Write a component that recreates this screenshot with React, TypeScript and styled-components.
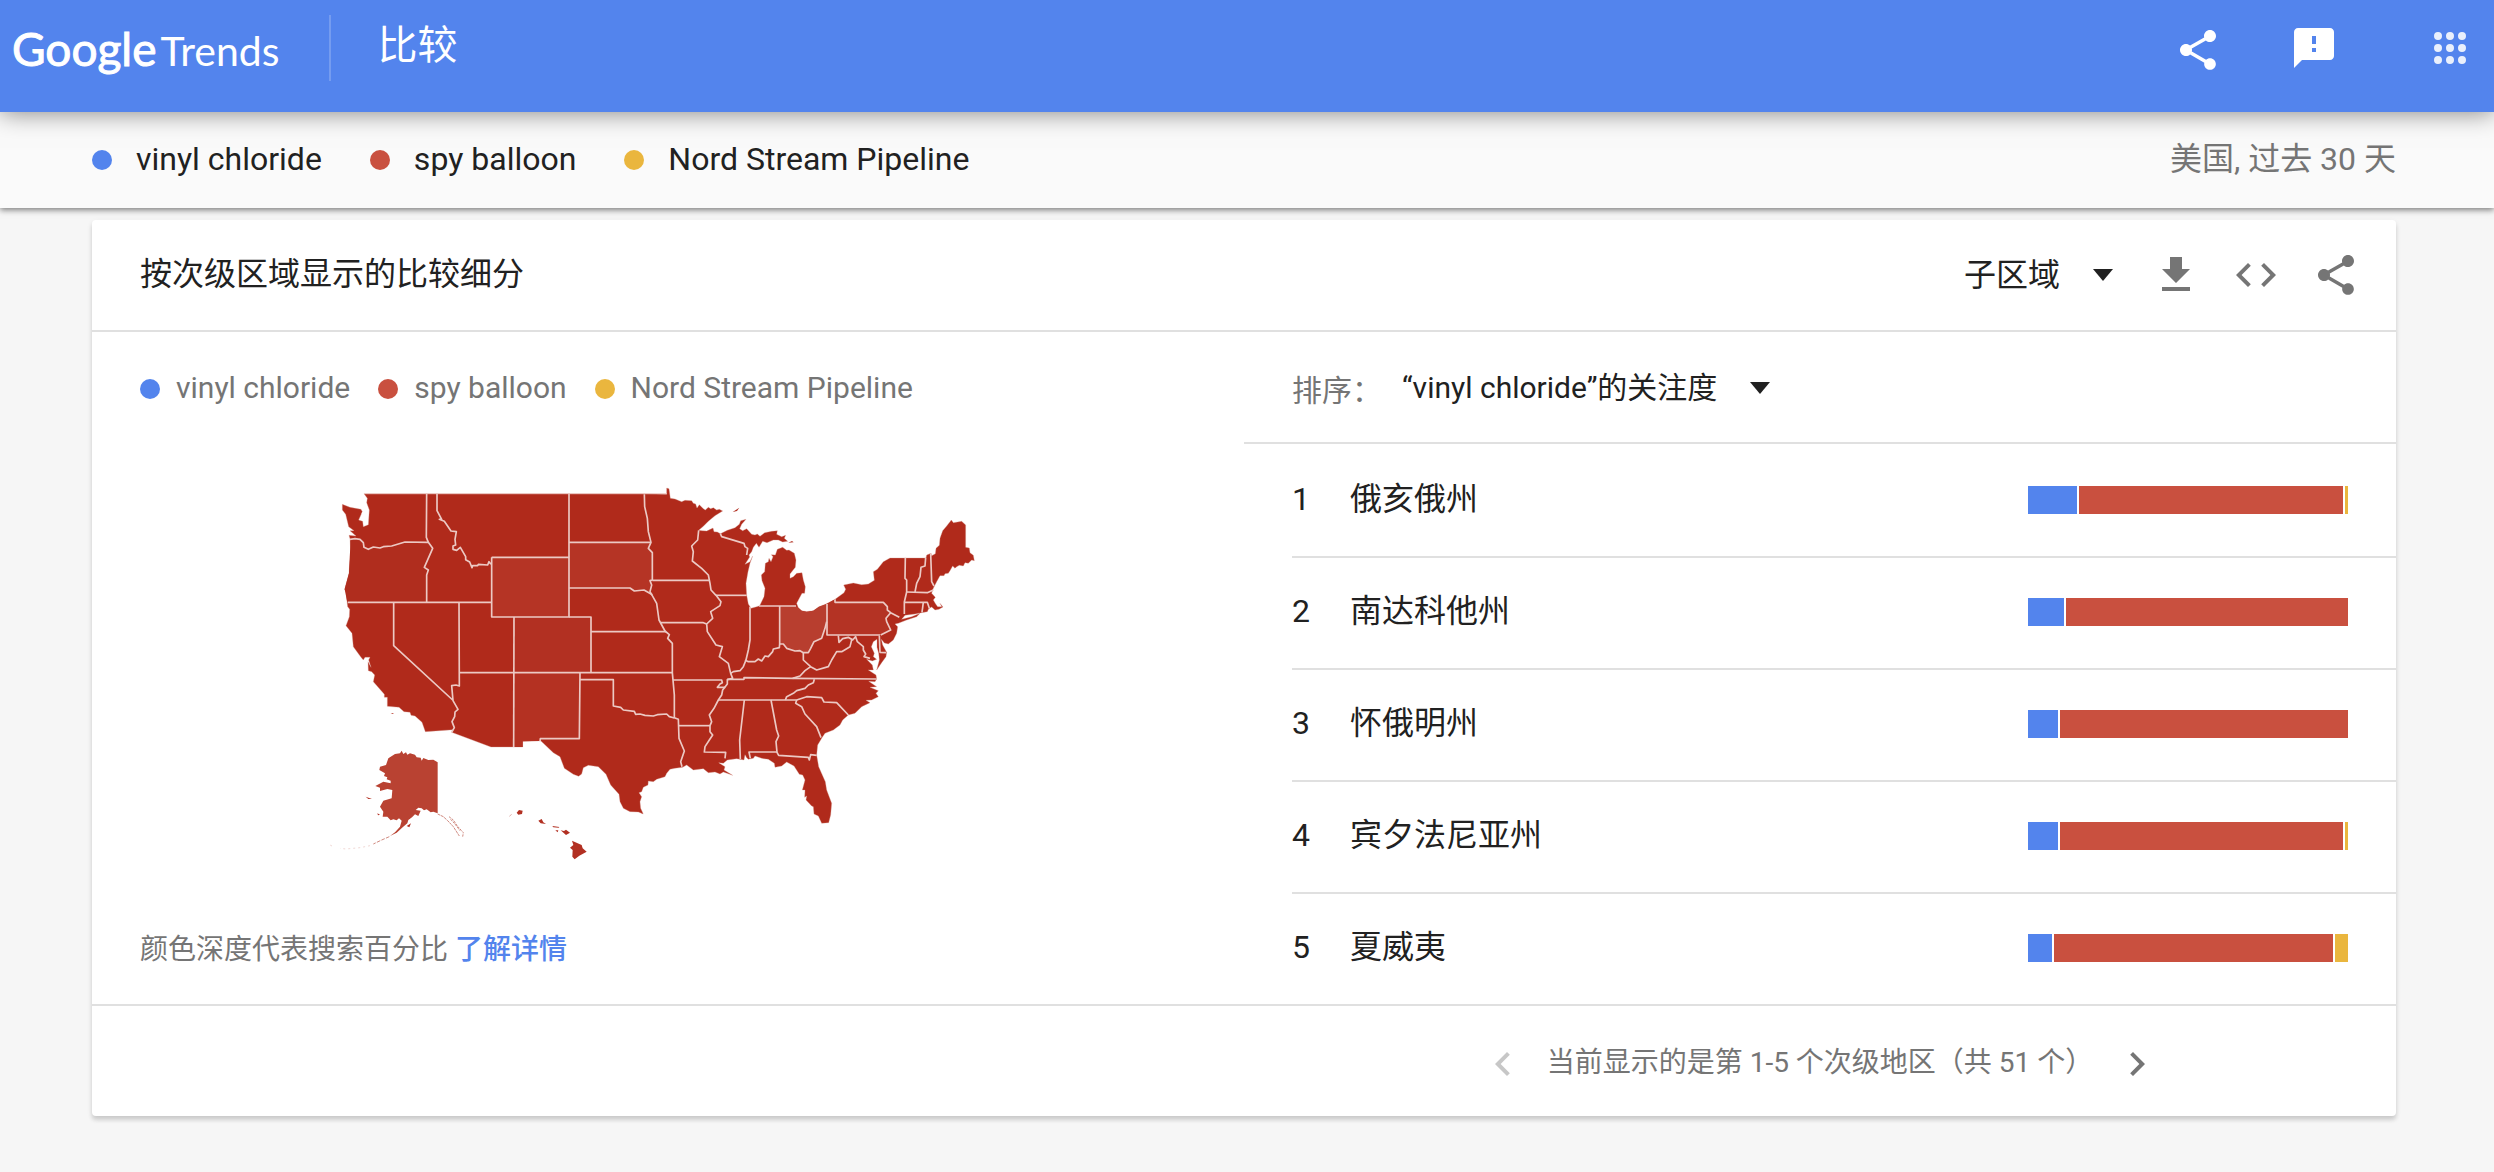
import React from 'react';
import styled, { createGlobalStyle, css } from 'styled-components';

const color = {
  blue: '#5384ed',
  red: '#c9503f',
  yellow: '#eab63e',
  text: '#212121',
  muted: '#757575',
  line: '#e0e0e0',
};

const GlobalStyle = createGlobalStyle`
  *, *::before, *::after { box-sizing: border-box; }
  body {
    margin: 0;
    background: #f6f6f6;
    color: ${color.text};
    font-family: Roboto, "Noto Sans CJK SC", sans-serif;
    font-size: 32px;
    line-height: 40px;
  }
  h1, h2, p, ul, ol { margin: 0; padding: 0; font-weight: 400; }
  ul, ol { list-style: none; }
`;

const Header = styled.header`
  position: relative;
  z-index: 2;
  display: flex;
  align-items: center;
  height: 112px;
  padding: 0 20px 16px 12px;
  background: ${color.blue};
  color: #fff;
  box-shadow: 0 0 24px rgba(0, 0, 0, 0.5);
`;

const Logo = styled.a`
  display: flex;
  align-items: baseline;
  gap: 4px;
  padding-top: 4px;
  color: inherit;
  font-family: Lato, sans-serif;
  font-size: 41px;
  line-height: 48px;
  text-decoration: none;
`;

const LogoBrand = styled.span`
  font-size: 46px;
  -webkit-text-stroke: 1px currentColor;
`;

const PageTitle = styled.h1`
  margin-left: 50px;
  padding: 11px 0 15px 46px;
  border-left: 2px solid rgba(255, 255, 255, 0.2);
  font-size: 40px;
`;

const HeaderActions = styled.div`
  display: flex;
  gap: 68px;
  margin-left: auto;
`;

const AppsSlot = styled.div`
  display: flex;
  margin-left: 20px;
  opacity: 0.88;
`;

const IconButton = styled.button`
  display: flex;
  flex: none;
  width: 48px;
  height: 48px;
  padding: 0;
  border: 0;
  background: none;
  color: inherit;
  cursor: pointer;

  &:disabled {
    opacity: 0.4;
    cursor: default;
  }
`;

const Glyph = styled.svg`
  display: block;
  width: 100%;
  height: 100%;
  fill: currentColor;
`;

const SubBar = styled.div`
  position: relative;
  z-index: 1;
  display: flex;
  align-items: center;
  justify-content: space-between;
  height: 96px;
  padding: 0 98px 0 92px;
  background: #fafafa;
  box-shadow: 0 2px 6px rgba(0, 0, 0, 0.5);
`;

const Terms = styled.ul<{ $compact?: boolean }>`
  display: flex;
  flex-wrap: wrap;
  gap: 48px;
  ${({ $compact }) =>
    $compact &&
    css`
      gap: 28px;
      color: ${color.muted};
      font-size: 30px;
      line-height: 36px;
    `}
`;

const Term = styled.li<{ $color: string; $gap: number }>`
  display: flex;
  align-items: center;
  gap: ${({ $gap }) => $gap}px;

  &::before {
    content: '';
    width: 20px;
    height: 20px;
    border-radius: 50%;
    background: ${({ $color }) => $color};
  }
`;

const TermName = styled.span`
  padding-bottom: 2px;
`;

const Scope = styled.p`
  padding-bottom: 2px;
  color: ${color.muted};
`;

const Card = styled.section`
  margin: 12px 98px 56px 92px;
  border-radius: 4px;
  background: #fff;
  box-shadow: 0 4px 4px rgba(0, 0, 0, 0.14), 0 2px 6px rgba(0, 0, 0, 0.06);
`;

const CardHeader = styled.div`
  display: flex;
  align-items: center;
  height: 112px;
  padding: 0 36px 0 48px;
  border-bottom: 2px solid ${color.line};
`;

const CardTitle = styled.h2`
  padding-bottom: 2px;
  font-size: 32px;
`;

const CardTools = styled.div`
  display: flex;
  gap: 32px;
  margin-left: 39px;
  color: ${color.muted};
`;

const Picker = styled.div<{ $end?: boolean }>`
  display: grid;
  align-items: center;
  margin-left: ${({ $end }) => ($end ? 'auto' : '0')};
`;

const PickerSelect = styled.select<{ $size: number }>`
  grid-area: 1 / 1;
  appearance: none;
  margin: 0;
  padding: 0 52px 0 0;
  border: 0;
  background: none;
  color: ${color.text};
  font: inherit;
  font-size: ${({ $size }) => $size}px;
  line-height: 40px;
  cursor: pointer;
`;

const PickerArrow = styled.span`
  grid-area: 1 / 1;
  justify-self: end;
  border-top: 12px solid ${color.text};
  border-right: 10px solid transparent;
  border-left: 10px solid transparent;
  pointer-events: none;
`;

const Columns = styled.div`
  display: grid;
  grid-template-columns: 1fr 1fr;
`;

const MapPanel = styled.div`
  padding: 38px 48px 34px;
`;

const MapDrawing = styled.svg`
  display: block;
  width: 736px;
  max-width: 100%;
  margin: 52px auto 50px;
`;

const Footnote = styled.p`
  color: ${color.muted};
  font-size: 28px;
`;

const TextLink = styled.a`
  color: ${color.blue};
  font-weight: 500;
  text-decoration: none;
`;

const SortBar = styled.div`
  display: flex;
  align-items: center;
  height: 112px;
  padding: 2px 0 0 48px;
  border-bottom: 2px solid ${color.line};
`;

const SortLabel = styled.label`
  padding-top: 6px;
  width: 110px;
  color: ${color.muted};
  font-size: 30px;
`;

const RegionList = styled.ol`
  padding-left: 48px;
`;

const Region = styled.li`
  display: flex;
  align-items: center;
  height: 112px;
  padding-right: 48px;

  & + & {
    padding-bottom: 2px;
    border-top: 2px solid ${color.line};
  }
`;

const Rank = styled.span`
  width: 58px;
  padding-bottom: 2px;
`;

const RegionName = styled.span`
  padding-bottom: 2px;
`;

const Bar = styled.div`
  display: flex;
  gap: 2px;
  width: 320px;
  height: 28px;
  margin-left: auto;
`;

const Segment = styled.span<{ $color: string }>`
  background: ${({ $color }) => $color};
`;

const CardFooter = styled.div`
  display: grid;
  grid-template-columns: 1fr 1fr;
  align-items: center;
  height: 112px;
  padding-top: 6px;
  border-top: 2px solid ${color.line};
`;

const Pager = styled.nav`
  display: flex;
  grid-column: 2;
  align-items: center;
  justify-content: center;
  gap: 20px;
  color: ${color.muted};
  font-size: 28px;
`;

const PagerText = styled.span`
  padding-bottom: 2px;
`;

const iconPaths = {
  share:
    'M18 16.08c-.76 0-1.44.3-1.96.77L8.91 12.7c.05-.23.09-.46.09-.7s-.04-.47-.09-.7l7.05-4.11c.54.5 1.25.81 2.04.81 1.66 0 3-1.34 3-3s-1.34-3-3-3-3 1.34-3 3c0 .24.04.47.09.7L8.04 9.81C7.5 9.31 6.79 9 6 9c-1.66 0-3 1.34-3 3s1.34 3 3 3c.79 0 1.5-.31 2.04-.81l7.12 4.16c-.05.21-.08.43-.08.65 0 1.61 1.31 2.92 2.92 2.92s2.92-1.31 2.92-2.92-1.31-2.92-2.92-2.92z',
  feedback:
    'M20 2H4c-1.1 0-1.99.9-1.99 2L2 22l4-4h14c1.1 0 2-.9 2-2V4c0-1.1-.9-2-2-2zm-7 12h-2v-2h2v2zm0-4h-2V6h2v4z',
  apps:
    'M6 8a2 2 0 1 0 0-4 2 2 0 0 0 0 4zm6 0a2 2 0 1 0 0-4 2 2 0 0 0 0 4zm6 0a2 2 0 1 0 0-4 2 2 0 0 0 0 4zM6 14a2 2 0 1 0 0-4 2 2 0 0 0 0 4zm6 0a2 2 0 1 0 0-4 2 2 0 0 0 0 4zm6 0a2 2 0 1 0 0-4 2 2 0 0 0 0 4zM6 20a2 2 0 1 0 0-4 2 2 0 0 0 0 4zm6 0a2 2 0 1 0 0-4 2 2 0 0 0 0 4zm6 0a2 2 0 1 0 0-4 2 2 0 0 0 0 4z',
  download: 'M19 9h-4V3H9v6H5l7 7 7-7zM5 18v2h14v-2H5z',
  code:
    'M9.4 16.6L4.8 12l4.6-4.6L8 6l-6 6 6 6 1.4-1.4zm5.2 0l4.6-4.6-4.6-4.6L16 6l6 6-6 6-1.4-1.4z',
  prev: 'M15.41 7.41L14 6l-6 6 6 6 1.41-1.41L10.83 12z',
  next: 'M10 6L8.59 7.41 13.17 12l-4.58 4.59L10 18l6-6z',
};

function Icon({ name, box = '0 0 24 24' }: { name: keyof typeof iconPaths; box?: string }) {
  return (
    <Glyph viewBox={box} aria-hidden="true">
      <path d={iconPaths[name]} />
    </Glyph>
  );
}

const terms = [
  { name: 'vinyl chloride', color: color.blue },
  { name: 'spy balloon', color: color.red },
  { name: 'Nord Stream Pipeline', color: color.yellow },
];

const regions = [
  { name: '俄亥俄州', shares: [49, 264, 3] },
  { name: '南达科他州', shares: [36, 282] },
  { name: '怀俄明州', shares: [30, 288] },
  { name: '宾夕法尼亚州', shares: [30, 283, 3] },
  { name: '夏威夷', shares: [24, 279, 13] },
];

/* Map geometry: the eastern half is drawn in its own frame, 1020 units to the right. */
const EAST = 1020;

const eastCoast =
  '80,103 80,84 87,86 91,115 105,117 125,125 135,121 155,122 160,130 167,132 171,144 178,134 190,146 196,150 205,142 212,146 220,143 230,150 238,148 248,153 ' +
  '225,167 205,184 190,199 176,211 187,212 200,213 211,208 219,204 222,215 232,216 241,221 262,211 285,203 298,193 302,182 318,178 305,193 299,206 308,212 320,206 335,223 345,225 352,222 360,229 374,218 395,214 412,212 410,223 425,230 437,226 433,235 443,244 428,246 415,240 400,240 381,248 368,244 357,262 349,250 340,262 335,275 327,285 329,291 315,313 330,305 338,288 330,310 324,335 318,370 320,405 325,432 333,445 350,440 ' +
  '359,437 372,410 375,385 366,362 364,345 374,335 376,310 385,305 387,295 393,305 399,290 394,284 406,285 412,268 428,262 440,271 447,270 463,280 468,300 466,322 450,342 450,355 460,350 470,340 486,338 490,360 496,380 494,400 486,400 470,430 475,443 485,452 500,455 520,452 537,440 558,432 ' +
  '585,418 612,398 617,388 611,375 640,369 665,374 685,372 703,361 700,335 712,328 730,305 750,294 858,294 860,285 873,280 875,287 886,281 888,265 898,256 900,235 908,212 920,198 934,180 940,188 965,184 977,195 977,262 988,264 990,278 1000,286 1003,302 995,300 985,310 975,308 970,318 958,316 950,320 945,325 938,318 930,332 925,340 915,341 912,347 900,347 890,365 880,385 875,400 886,412 880,420 887,432 893,440 905,440 900,430 909,441 897,448 885,450 875,441 866,446 862,455 845,458 825,462 795,466 785,478 815,470 840,460 830,470 800,480 775,490 765,492 ' +
  '773,500 770,520 760,540 745,552 733,549 724,538 728,555 740,577 738,590 725,608 710,630 718,600 716,580 711,562 711,538 700,545 694,560 703,580 700,590 710,598 697,603 680,598 697,615 700,630 685,630 708,645 710,657 705,665 686,664 710,680 690,682 715,692 708,700 715,710 695,720 678,721 690,728 665,740 645,760 625,765 ' +
  '608,780 600,795 580,810 555,820 545,835 533,855 530,885 536,920 556,965 560,990 575,1030 572,1065 566,1088 545,1090 535,1068 522,1062 520,1040 515,1038 498,1020 500,1008 494,1012 495,990 487,990 495,960 488,945 478,943 462,918 440,906 425,918 405,922 403,910 385,898 365,895 345,888 340,895 325,898 320,893 315,884 312,900 290,896 262,900 250,910 236,908 255,920 252,930 278,946 250,936 240,942 225,936 205,938 190,926 160,930 140,915 128,922 105,925 90,928 80,940 75,950 50,958 40,965 25,963 24,975 10,982 5,995 -3,998 5,1010 0,1025 2,1045 10,1062';

const westCoastNorth = '192,101 1033,101';
const westCoastSouth =
  '1015,1056 990,1055 970,1045 960,1025 957,1003 932,975 918,943 895,920 865,916 850,923 845,942 836,949 820,943 793,925 780,890 760,878 722,842 668,844 668,861 573,861 455,817 460,809 376,815 366,787 345,768 333,766 330,757 312,755 297,742 262,739 262,712 253,712 253,703 220,665 224,645 215,635 205,632 204,605 213,622 206,600 210,592 195,592 190,600 183,592 160,560 156,520 138,497 148,470 149,448 143,440 141,425 138,395 134,388 147,340 152,270 150,236 147,226 168,228 150,212 162,212 146,200 137,163 127,150 127,133 150,142 183,148 187,155 176,180 188,184 190,200 205,194 208,150 200,128 202,115';

const shift = (points: string, dx: number) =>
  points
    .split(' ')
    .map((p) => {
      const [x, y] = p.split(',').map(Number);
      return `${x + dx},${y}`;
    })
    .join(' ');

const mainland = [westCoastNorth, shift(eastCoast, EAST), westCoastSouth].join(' ');

const westTints: [string, string][] = [
  ['#b02d1e', '152,236 165,236 180,238 190,248 192,262 205,268 220,261 240,264 275,258 315,246 385,247 398,265 373,322 385,330 380,345 380,427 142,427 134,388 147,340'],
  ['#b23022', '642,471 873,471 873,638 642,638'],
  ['#b43122', '642,638 840,638 838,836 721,836 720,843 668,844 668,861 642,861'],
  ['#b53425', '575,292 807,292 807,471 575,471'],
  ['#b53425', '807,247 1053,247 1045,265 1057,278 1057,360 1050,375 1055,403 1032,392 1003,393 990,384 807,384'],
];

const eastTints: [string, string][] = [
  ['#b83e2f', '419,440 468,438 475,443 485,452 500,455 520,452 537,440 561,432 560,485 555,505 545,540 522,545 512,565 505,578 490,578 480,572 465,573 440,565 430,552 419,552'],
  ['#b43324', '561,432 585,418 585,427 730,427 742,440 742,450 752,458 738,475 740,485 752,510 722,525 561,525'],
];

const westBorders = [
  '150,238 165,236 180,238 190,248 192,262 205,268 220,261 240,264 250,260 275,258 315,246 385,247',
  '380,101 379,232 385,247 398,265 373,322 385,330 380,345 380,427',
  '411,101 411,152 425,178 418,178 433,184 453,213 469,215 465,238 467,255 459,258 459,268 470,271 481,262 497,290 497,299 509,306 516,323 518,317 533,317 535,313 563,315 567,305 573,313',
  '575,292 807,292 807,471 575,471 575,292',
  '143,427 575,427',
  '281,427 281,557 458,720',
  '477,427 478,678 468,675 455,677 459,722 474,748 465,756 464,770 456,785 463,803 455,817',
  '642,471 641,861',
  '478,638 1117,638',
  '807,471 873,471 873,638',
  '807,101 807,292',
  '807,247 1053,247',
  '807,384 990,384 1003,393 1032,390 1057,404',
  '873,515 1098,515',
  '720,844 721,836 838,836 840,638',
  '840,659 940,659 940,738 962,742 970,750 1003,754 1007,763 1020,762 1035,766 1060,768 1072,764 1100,762 1108,770 1123,774',
];

const eastBorders = [
  '13,103 14,140 22,175 25,215 33,247 25,265 37,278 37,360 30,362 35,375 30,395 50,430 57,480 75,513 88,524 83,535 97,550 97,638 103,705 103,773 115,778 117,835 133,873 122,905 126,920',
  '37,361 207,361',
  '62,488 190,488 200,492',
  '228,406 320,406',
  '176,211 173,240 155,258 160,275 157,303 185,325 205,345 210,370 213,390 228,406 243,425 240,437 212,455 218,475 200,492 202,515 228,555 247,560 238,590 265,610 272,640 278,655 262,659 262,672 248,690 245,705 235,720 222,745 208,765 215,785 210,797 210,815 218,825 208,840 195,860 193,876 257,877 255,895',
  '241,221 245,230 312,250 315,260 323,265 320,285',
  '99,660 245,660 247,668 240,672 232,682 256,682',
  '117,797 210,797',
  '330,440 330,540 325,570 318,600 310,620 300,632 280,635 272,640',
  '419,438 419,552',
  '315,600 325,605 345,605 355,597 365,603 375,588 385,590 398,575 400,567 418,563 419,552 430,552 440,565 465,573 480,572 490,578 505,578 512,565 522,545 545,535 555,505 560,485',
  '357,438 468,438',
  '561,432 561,525 720,525',
  '585,418 585,427 730,427 742,440 742,450 752,458 778,472',
  '752,458 738,475 740,485 752,510 722,525',
  '718,527 720,577 738,578',
  '595,527 597,547 608,536 625,532 638,540 647,530 652,545 670,560 670,570 677,582 672,590 690,595',
  '636,536 630,560 605,575 590,575 575,600 565,620 530,630 512,620 490,600 490,578',
  '512,620 495,632 480,648 458,655',
  '262,658 312,658 312,653 458,655 710,657',
  '523,658 520,668 505,675 495,685 470,692 460,700 440,710 436,720',
  '235,720 470,720 500,710 545,713 552,726 590,728 625,765',
  '470,720 467,730 485,740 495,762 530,800 543,833',
  '313,720 299,840 301,897',
  '393,720 410,810 416,828 408,845 411,877 416,886 505,892 508,900 512,884 530,886',
  '411,876 327,876 331,895',
  '796,293 795,355 800,360 800,396 793,426 793,462',
  '857,293 855,318 843,322 840,350 830,370 825,396',
  '872,280 875,365 882,378',
  '800,396 862,398 880,390',
  '793,427 862,427 868,445',
  '850,427 846,457',
];

const alaska =
  '305,872 310,882 318,877 322,884 330,880 345,884 350,892 362,893 365,902 370,894 385,900 400,899 413,907 413,1060 400,1055 392,1057 380,1048 372,1051 365,1045 355,1043 347,1050 362,1052 355,1068 345,1063 336,1072 325,1080 322,1090 308,1102 290,1118 270,1128 285,1117 300,1100 305,1082 297,1075 290,1081 280,1078 272,1081 262,1070 248,1070 250,1055 240,1040 250,1022 275,1015 277,990 262,987 240,993 240,983 226,978 250,965 272,970 272,962 260,958 262,952 252,948 255,940 238,930 240,920 258,915 265,895 285,882 300,880';

const islands = [
  '650,1058 657,1050 668,1052 666,1062 655,1064',
  '715,1082 725,1077 730,1087 738,1092 722,1090',
  '782,1111 792,1113 798,1109 810,1118 798,1125',
  '757,1098 778,1101 776,1103 760,1102',
  '766,1111 775,1111 773,1117',
  '816,1142 845,1155 848,1165 860,1175 838,1187 824,1198 817,1190 818,1170 810,1163 820,1155',
  '1298,156 1318,143 1311,153',
  '1465,248 1481,247 1476,243',
  '272,759 282,760 278,762',
  '197,1010 205,1013 216,1016 205,1017',
  '232,1060 240,1064 234,1066',
  '320,1098 333,1090 328,1102',
];

function UnitedStatesMap() {
  return (
    <MapDrawing viewBox="0 0 2208 1260" role="img" aria-label="美国">
      <polygon points={mainland} fill="#b02a1b" stroke="#d99a92" strokeWidth="1" />
      {westTints.map(([fill, points]) => (
        <polygon key={points} points={points} fill={fill} />
      ))}
      <g transform={`translate(${EAST} 0)`}>
        {eastTints.map(([fill, points]) => (
          <polygon key={points} points={points} fill={fill} />
        ))}
      </g>
      <g fill="none" stroke="#ecc9c4" strokeWidth="5" strokeLinejoin="round">
        <path d="M192 101H1100" strokeWidth="3" />
        {westBorders.map((points) => (
          <polyline key={points} points={points} />
        ))}
        <g transform={`translate(${EAST} 0)`}>
          {eastBorders.map((points) => (
            <polyline key={points} points={points} />
          ))}
        </g>
      </g>
      <polygon points={alaska} fill="#b94232" />
      <g fill="none" stroke="#d08a80" strokeWidth="3">
        <path d="M268 1130L245 1140L220 1152" strokeDasharray="11 4" />
        <path d="M210 1157L180 1163L138 1167L120 1165M96 1158L88 1154" strokeWidth="1" strokeDasharray="6 9" />
        <path d="M413 1062L430 1070L443 1082L460 1100L478 1128" strokeDasharray="9 2" />
        <path d="M447 1070L460 1080L472 1098L490 1118L488 1130M452 1078L465 1092L480 1112" strokeDasharray="7 3" />
        <path d="M628 1069L635 1063" strokeWidth="2" />
      </g>
      <g fill="#b23022">
        {islands.map((points) => (
          <polygon key={points} points={points} />
        ))}
      </g>
      <g fill="none" stroke="#fff" strokeWidth="4">
        <path d="M178 120L190 126M186 135L198 142M192 150L186 162M180 178L194 172M196 182L200 160" strokeDasharray="5 3" />
      </g>
    </MapDrawing>
  );
}

function TermLegend({ compact }: { compact?: boolean }) {
  return (
    <Terms $compact={compact}>
      {terms.map((term) => (
        <Term key={term.name} $color={term.color} $gap={compact ? 16 : 24}>
          <TermName>{term.name}</TermName>
        </Term>
      ))}
    </Terms>
  );
}

export default function App() {
  return (
    <>
      <GlobalStyle />
      <Header>
        <Logo href="#">
          <LogoBrand>Google</LogoBrand>
          <span>Trends</span>
        </Logo>
        <PageTitle>比较</PageTitle>
        <HeaderActions>
          <IconButton type="button" aria-label="分享">
            <Icon name="share" box="0 -1 24 24" />
          </IconButton>
          <IconButton type="button" aria-label="反馈">
            <Icon name="feedback" />
          </IconButton>
          <AppsSlot>
            <IconButton type="button" aria-label="应用">
              <Icon name="apps" />
            </IconButton>
          </AppsSlot>
        </HeaderActions>
      </Header>

      <SubBar>
        <TermLegend />
        <Scope>美国, 过去 30 天</Scope>
      </SubBar>

      <main>
        <Card>
          <CardHeader>
            <CardTitle>按次级区域显示的比较细分</CardTitle>
            <Picker $end>
              <PickerSelect $size={32} aria-label="地区级别">
                <option>子区域</option>
              </PickerSelect>
              <PickerArrow />
            </Picker>
            <CardTools>
              <IconButton type="button" aria-label="下载">
                <Icon name="download" />
              </IconButton>
              <IconButton type="button" aria-label="嵌入">
                <Icon name="code" />
              </IconButton>
              <IconButton type="button" aria-label="分享">
                <Icon name="share" />
              </IconButton>
            </CardTools>
          </CardHeader>

          <Columns>
            <MapPanel>
              <TermLegend compact />
              <UnitedStatesMap />
              <Footnote>
                颜色深度代表搜索百分比 <TextLink href="#">了解详情</TextLink>
              </Footnote>
            </MapPanel>

            <div>
              <SortBar>
                <SortLabel htmlFor="sort">排序：</SortLabel>
                <Picker>
                  <PickerSelect id="sort" $size={30}>
                    <option>“vinyl chloride”的关注度</option>
                  </PickerSelect>
                  <PickerArrow />
                </Picker>
              </SortBar>
              <RegionList>
                {regions.map((region, i) => (
                  <Region key={region.name}>
                    <Rank>{i + 1}</Rank>
                    <RegionName>{region.name}</RegionName>
                    <Bar>
                      {region.shares.map((share, t) => (
                        <Segment
                          key={terms[t].name}
                          $color={terms[t].color}
                          style={{ flexGrow: share }}
                        />
                      ))}
                    </Bar>
                  </Region>
                ))}
              </RegionList>
            </div>
          </Columns>

          <CardFooter>
            <Pager aria-label="分页">
              <IconButton type="button" aria-label="上一页" disabled>
                <Icon name="prev" />
              </IconButton>
              <PagerText>当前显示的是第 1-5 个次级地区（共 51 个）</PagerText>
              <IconButton type="button" aria-label="下一页">
                <Icon name="next" />
              </IconButton>
            </Pager>
          </CardFooter>
        </Card>
      </main>
    </>
  );
}
